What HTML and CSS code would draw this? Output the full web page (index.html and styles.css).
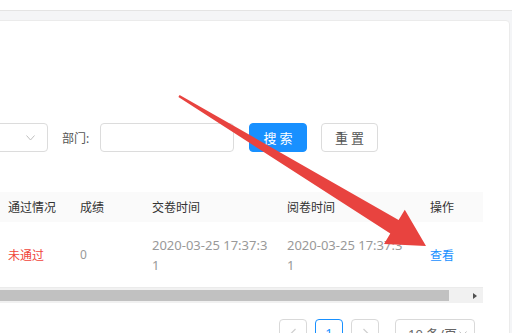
FILE: index.html
```html
<!DOCTYPE html>
<html lang="zh-CN">
<head>
<meta charset="utf-8">
<title>阅卷列表</title>
<link rel="stylesheet" href="styles.css">
</head>
<body>
<header class="topbar"></header>
<main class="main">
  <section class="card">
    <form class="filters">
      <div class="select">
        <svg class="chev" width="9" height="6" viewBox="0 0 9 6"><polyline points="0.5,0.5 4.5,5 8.5,0.5" fill="none" stroke="#bfbfbf" stroke-width="1"/></svg>
      </div>
      <label class="label">部门:</label>
      <input class="input" type="text">
      <button type="button" class="btn btn-primary">搜 索</button>
      <button type="button" class="btn btn-default">重 置</button>
    </form>

    <div class="table">
      <div class="tr thead">
        <div class="td">通过情况</div>
        <div class="td">成绩</div>
        <div class="td">交卷时间</div>
        <div class="td">阅卷时间</div>
        <div class="td">操作</div>
      </div>
      <div class="tr tbody">
        <div class="td fail">未通过</div>
        <div class="td muted">0</div>
        <div class="td muted date">2020-03-25 17:37:31</div>
        <div class="td muted date">2020-03-25 17:37:31</div>
        <div class="td"><a class="link">查看</a></div>
      </div>
      <div class="hscroll">
        <div class="thumb"></div>
        <span class="sarrow"></span>
      </div>
    </div>

    <nav class="pager">
      <span class="pg pg-nav">
        <svg width="7" height="10" viewBox="0 0 7 10"><polyline points="5.5,1 1.5,5 5.5,9" fill="none" stroke="#cfcfcf" stroke-width="1.2"/></svg>
      </span>
      <span class="pg pg-active">1</span>
      <span class="pg pg-nav">
        <svg width="7" height="10" viewBox="0 0 7 10"><polyline points="1.5,1 5.5,5 1.5,9" fill="none" stroke="#cfcfcf" stroke-width="1.2"/></svg>
      </span>
      <span class="pg-size">10 条/页<svg width="8" height="5" viewBox="0 0 8 5"><polyline points="0.5,0.5 4,4.5 7.5,0.5" fill="none" stroke="#bfbfbf" stroke-width="1"/></svg></span>
    </nav>
  </section>
</main>
<svg class="annot" width="512" height="333" viewBox="0 0 512 333">
  <polygon fill="#e8433f" points="179.6,95 398.6,220 404.8,209.7 426,246 384,243.9 390.3,233.6 178.4,97"/>
</svg>
</body>
</html>
```

FILE: styles.css
```css
* {
  box-sizing: border-box;
}

html,
body {
  margin: 0;
}

body {
  position: relative;
  width: 512px;
  height: 333px;
  overflow: hidden;
  background: #f4f5f7;
  font-family: "Noto Sans", "Noto Sans CJK SC", sans-serif;
  font-size: 12px;
  color: #555;
}

.topbar {
  height: 11px;
  background: #fff;
  border-bottom: 1px solid #e4e4e4;
}

.main {
  padding-top: 9px;
}

.card {
  margin-left: -24px;
  margin-right: 2px;
  height: 340px;
  padding: 102px 0 0 23px;
  background: #fff;
  border: 1px solid #ebebeb;
  border-radius: 4px;
}

.filters {
  display: flex;
  align-items: center;
  height: 29px;
  margin: 0 0 0 -80px;
}

.select {
  display: flex;
  align-items: center;
  justify-content: flex-end;
  width: 128px;
  height: 29px;
  padding-right: 12px;
  border: 1px solid #dcdcdc;
  border-radius: 4px;
}

.label {
  width: 38px;
  margin-left: 14px;
  color: #555;
}

.input {
  width: 134px;
  height: 29px;
  margin: 0;
  padding: 0;
  border: 1px solid #dcdcdc;
  border-radius: 4px;
  background: #fff;
}

.btn {
  height: 29px;
  margin: 0;
  padding: 0;
  border: 1px solid #dcdcdc;
  border-radius: 4px;
  background: #fff;
  color: #555;
  font-family: "Noto Sans CJK SC", sans-serif;
  font-size: 13px;
}

.btn-primary {
  width: 58px;
  margin-left: 15px;
  background: #1890ff;
  border-color: #1890ff;
  color: #fff;
}

.btn-default {
  width: 57px;
  margin-left: 14px;
}

.table {
  width: 483px;
  margin-top: 40px;
}

.tr {
  display: grid;
  grid-template-columns: 72px 72px 135px 143px 61px;
  align-items: center;
}

.td {
  padding-left: 8px;
}

.thead {
  height: 30px;
  background: #fafafa;
  color: #333;
}

.tbody {
  height: 66px;
  border-bottom: 1px solid #ebebeb;
}

.muted {
  color: #999;
}

.date {
  width: 125px;
  font-size: 13px;
  line-height: 20px;
  word-break: break-all;
}

.fail {
  color: #f0443a;
}

.link {
  color: #1890ff;
  cursor: pointer;
}

.hscroll {
  display: flex;
  align-items: center;
  height: 15px;
  padding-right: 6px;
  background: #f1f1f1;
}

.thumb {
  width: 449px;
  height: 11px;
  background: #c1c1c1;
}

.sarrow {
  margin-left: auto;
  width: 0;
  height: 0;
  border-top: 3px solid transparent;
  border-bottom: 3px solid transparent;
  border-left: 4px solid #505050;
}

.pager {
  display: flex;
  justify-content: flex-end;
  align-items: center;
  width: 483px;
  margin-top: 16px;
  padding-right: 8px;
}

.pg {
  display: flex;
  align-items: center;
  justify-content: center;
  width: 28px;
  height: 28px;
  margin-left: 8px;
  border: 1px solid #d9d9d9;
  border-radius: 4px;
  background: #fff;
  font-size: 13px;
}

.pg-active {
  border-color: #1890ff;
  color: #1890ff;
}

.pg-size {
  display: flex;
  align-items: center;
  gap: 2px;
  width: 80px;
  height: 28px;
  margin-left: 16px;
  padding-left: 12px;
  border: 1px solid #d9d9d9;
  border-radius: 4px;
  color: #666;
  font-size: 13px;
}

.annot {
  position: absolute;
  top: 0;
  left: 0;
  pointer-events: none;
}
```
